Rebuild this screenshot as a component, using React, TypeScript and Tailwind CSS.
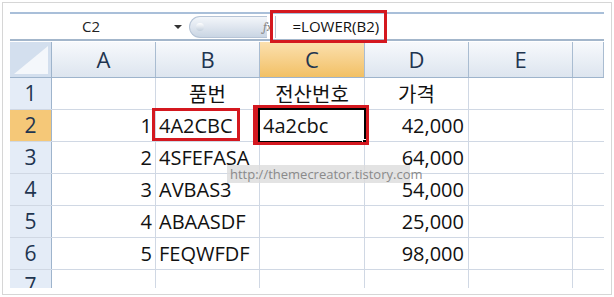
import React from 'react';

const cols = ['A', 'B', 'C', 'D', 'E', ''];
const colWidths = ['w-[104px]', 'w-[104px]', 'w-[105px]', 'w-[104px]', 'w-[104px]', 'w-[31px]'];

type Row = { n: number; a: string; b: string; c: string; d: string; head?: boolean };

const rows: Row[] = [
  { n: 1, a: '', b: '품번', c: '전산번호', d: '가격', head: true },
  { n: 2, a: '1', b: '4A2CBC', c: '4a2cbc', d: '42,000' },
  { n: 3, a: '2', b: '4SFEFASA', c: '', d: '64,000' },
  { n: 4, a: '3', b: 'AVBAS3', c: '', d: '54,000' },
  { n: 5, a: '4', b: 'ABAASDF', c: '', d: '25,000' },
  { n: 6, a: '5', b: 'FEQWFDF', c: '', d: '98,000' },
  { n: 7, a: '', b: '', c: '', d: '' },
];

const font = { fontFamily: '"Open Sans", "Noto Sans CJK KR", sans-serif' };

const App: React.FC = () => {
  return (
    <div className="relative w-[614px] h-[297px] bg-white p-[2px]" style={font}>
      <div className="h-full border border-[#d6d6d6] pl-[7px] pt-[9px]">
        <div className="w-[594px] h-[276px] overflow-hidden">
          {/* formula bar */}
          <div className="h-[2px] bg-[#a9bfd9]" />
          <div className="flex items-center h-[25px] bg-white">
            <div className="w-[160px] text-center text-[15px] text-[#222] pl-[2px]">C2</div>
            <svg width="10" height="6" viewBox="0 0 10 6" className="ml-[3px]">
              <path d="M1 1h8L5 5z" fill="#333" />
            </svg>
            <div className="ml-[6px] h-[22px] w-[78px] rounded-l-full bg-gradient-to-b from-[#f3f6fa] via-[#dfe6ef] to-[#c9d5e3] border border-[#b6c4d6] border-r-0 flex items-center pl-[6px]">
              <div className="w-[8px] h-[8px] rounded-full bg-gradient-to-b from-white to-[#c3cfdd]" />
            </div>
            <span className="ml-[-4px] text-[13px] italic text-[#888] font-serif">fx</span>
            <div className="ml-[2px] w-px h-[22px] bg-[#b8c4d2]" />
            <div className="pl-[17px] text-[15px] text-[#111]">=LOWER(B2)</div>
          </div>
          <div className="h-[2px] bg-[#a3b6cb]" />
          <div className="h-px bg-white" />

          {/* column headers */}
          <div className="flex h-[36px] border-b border-[#9eb4cc]">
            <div className="w-[42px] h-full border-r border-[#9eb4cc] bg-[#d3dfee] flex items-end justify-end p-[3px]">
              <svg width="34" height="28" viewBox="0 0 34 28">
                <path d="M34 0 L34 28 L0 28 Z" fill="#f4f7fb" />
              </svg>
            </div>
            {cols.map((c, i) => (
              <div
                key={i}
                className={`${colWidths[i]} h-full border-r border-[#a9bcd1] flex items-center justify-center text-[22px] text-[#1f3550] ${
                  c === 'C'
                    ? 'bg-gradient-to-b from-[#fbe0ae] to-[#f2c063]'
                    : 'bg-gradient-to-b from-[#f7f9fc] to-[#dde5ef]'
                }`}
              >
                {c}
              </div>
            ))}
          </div>

          {/* rows */}
          {rows.map(r => (
            <div key={r.n} className="flex h-[32px] border-b border-[#d0d8e4]">
              <div
                className={`w-[42px] h-full border-r border-[#9eb4cc] flex items-center justify-center text-[21px] text-[#1f3550] ${
                  r.n === 2 ? 'bg-[#f5c878]' : 'bg-[#e4ecf7]'
                }`}
              >
                {r.n}
              </div>
              <div className="w-[104px] h-full border-r border-[#d0d8e4] flex items-center justify-end pr-[3px] text-[20px] text-[#111]">
                {r.a}
              </div>
              <div
                className={`w-[104px] h-full border-r border-[#d0d8e4] flex items-center text-[20px] text-[#111] whitespace-nowrap ${
                  r.head ? 'justify-center pt-[2px]' : 'pl-[3px]'
                }`}
              >
                {r.b}
              </div>
              <div
                className={`w-[105px] h-full border-r border-[#d0d8e4] flex items-center text-[20px] text-[#111] ${
                  r.head ? 'justify-center pt-[2px]' : 'pl-[3px]'
                }`}
              >
                {r.c}
              </div>
              <div
                className={`w-[104px] h-full border-r border-[#d0d8e4] flex items-center text-[20px] text-[#111] ${
                  r.head ? 'justify-center pt-[2px]' : 'justify-end pr-[4px]'
                }`}
              >
                {r.d}
              </div>
              <div className="w-[104px] h-full border-r border-[#d0d8e4]" />
              <div className="w-[31px] h-full" />
            </div>
          ))}
        </div>
      </div>

      {/* selection on C2 */}
      <div className="absolute left-[258px] top-[108px] w-[108px] h-[35px] border-2 border-black" />
      <div className="absolute left-[362px] top-[139px] w-[5px] h-[5px] bg-black border border-white" />

      {/* red highlight boxes */}
      <div className="absolute left-[270px] top-[10px] w-[117px] h-[33px] border-[3px] border-[#d4181f]" />
      <div className="absolute left-[152px] top-[108px] w-[88px] h-[33px] border-[3px] border-[#d4181f]" />
      <div className="absolute left-[253px] top-[105px] w-[116px] h-[40px] border-[3px] border-l-[5px] border-[#d4181f]" />

      {/* watermark */}
      <div className="absolute left-[227px] top-[165px] h-[18px] w-[183px] pl-[3px] bg-[#dcdcdc]/80 text-[13px] leading-[18px] text-[#8a8a8a] whitespace-nowrap">
        http://themecreator.tistory.com
      </div>
    </div>
  );
};

export default App;
